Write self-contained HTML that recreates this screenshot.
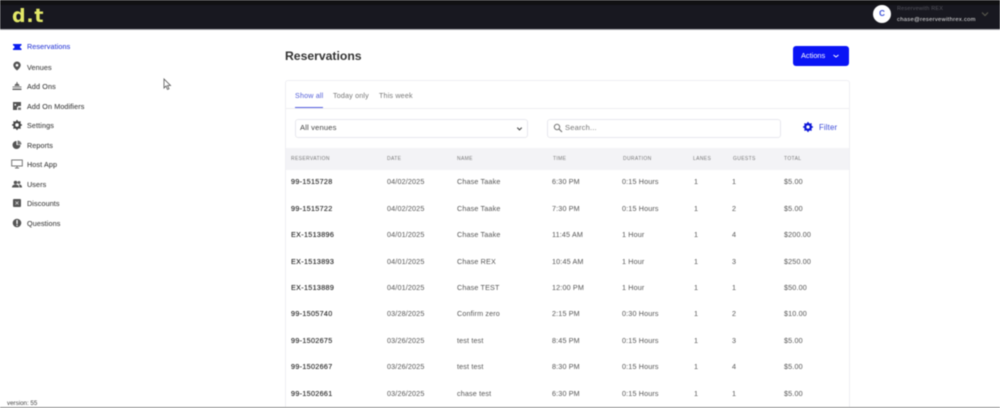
<!DOCTYPE html>
<html><head><meta charset="utf-8"><style>
html,body{margin:0;padding:0;height:408px;overflow:hidden}
body{width:1000px;position:relative;background:#fff;font-family:"Liberation Sans",sans-serif;color:#444}
.a{position:absolute;white-space:nowrap;line-height:12px}
.n{font-size:7.2px;left:27px;color:#444;letter-spacing:.12px;-webkit-text-stroke:.1px #444}
.i{position:absolute;left:12px;width:10px;height:10px}
.h{font-size:5px;top:153px;color:#777;letter-spacing:.35px;line-height:12px}
.c{font-size:7.2px;color:#555;letter-spacing:.15px}
.r{color:#222;font-size:7.2px;letter-spacing:.32px;-webkit-text-stroke:.12px #222}
#w{position:absolute;left:0;top:0;width:1000px;height:408px;overflow:hidden;filter:blur(.4px)}
</style></head><body><div id="w">
<div class="a" style="left:0;top:0;width:1000px;height:29px;background:#181820;border-bottom:1px solid #a9a9ad"></div>
<div class="a" style="left:0;top:0;width:1000px;height:5px;background:#111113"></div>
<div class="a" style="left:12px;top:5px;font-family:'DejaVu Sans',sans-serif;font-size:19px;line-height:22px;font-weight:bold;color:#e3e868;letter-spacing:.8px">d.t</div>
<div class="a" style="left:873px;top:5px;width:18px;height:18px;border-radius:50%;background:#fff;color:#3b50d8;font-size:8px;font-weight:bold;line-height:18px;text-align:center">C</div>
<div class="a" style="left:897px;top:3px;font-size:5.5px;color:#55555c;line-height:12px;letter-spacing:.2px">Reservewith REX</div>
<div class="a" style="left:897px;top:14px;font-size:5.8px;color:#e8e8e8;line-height:12px;letter-spacing:.3px">chase@reservewithrex.com</div>
<svg class="i" style="left:980px;top:9px" viewBox="0 0 10 10"><path d="M2 3.500l3 3 3-3" fill="none" stroke="#56564c" stroke-width="1.200"/></svg>

<svg class="i" style="top:42px" viewBox="0 0 10 10"><path d="M1 2h8.500v1.500a1.500 1.500 0 000 3V8H1V6.500a1.500 1.500 0 000-3z" fill="#0a1ef0"/></svg>
<div class="a n" style="top:41px;color:#3342d8;-webkit-text-stroke:.1px #3342d8">Reservations</div>
<svg class="i" style="top:61px" viewBox="0 0 10 10"><path d="M5 .5a3.700 3.700 0 013.700 3.700C8.700 6.500 5 9.500 5 9.500S1.300 6.500 1.300 4.200A3.700 3.700 0 015 .5z" fill="#555"/><circle cx="5" cy="4.200" r="1.300" fill="#fff"/></svg>
<div class="a n" style="top:62px">Venues</div>
<svg class="i" style="top:81px" viewBox="0 0 10 10"><path d="M2.500 5a2.500 2.500 0 015 0z" fill="#666"/><rect x="4.500" y="1" width="1" height="2" fill="#666"/><rect x=".5" y="5.500" width="9" height="1" fill="#777"/><rect x=".5" y="7.500" width="9" height="1.500" fill="#666"/></svg>
<div class="a n" style="top:81px">Add Ons</div>
<svg class="i" style="top:101px" viewBox="0 0 10 10"><path d="M1 1h8v4H6v1H5v3H1z" fill="#555"/><rect x="2.500" y="3" width="1.500" height="1.500" fill="#fff"/><rect x="6" y="6.500" width="3" height="2.500" fill="#777"/></svg>
<div class="a n" style="top:101px">Add On Modifiers</div>
<svg class="i" style="top:120px" viewBox="0 0 10 10"><circle cx="5" cy="5" r="3" fill="none" stroke="#444" stroke-width="2"/><path d="M5 0v10M0 5h10M1.500 1.500l7 7M8.500 1.500l-7 7" stroke="#444" stroke-width="1.300"/><circle cx="5" cy="5" r="1.700" fill="#fff"/></svg>
<div class="a n" style="top:120px">Settings</div>
<svg class="i" style="top:140px" viewBox="0 0 10 10"><path d="M4.500 1a4 4 0 104 4h-4z" fill="#555"/><path d="M5.500 .5a4 4 0 014 4h-4z" fill="#777"/></svg>
<div class="a n" style="top:140px">Reports</div>
<svg class="i" style="top:159px;left:11px;width:12px" viewBox="0 0 12 10"><rect x=".7" y="1" width="10.600" height="6" fill="none" stroke="#777" stroke-width="1"/><path d="M4 9h4M6 7v2" stroke="#777"/></svg>
<div class="a n" style="top:159px">Host App</div>
<svg class="i" style="top:179px" viewBox="0 0 10 10"><circle cx="3.500" cy="3.500" r="1.800" fill="#555"/><circle cx="7" cy="3.500" r="1.500" fill="#666"/><path d="M0 8.500c0-2 1.500-3 3.500-3s3.500 1 3.500 3zM7.500 8.500h2.500c0-2-1-3-3-3z" fill="#555"/></svg>
<div class="a n" style="top:179px">Users</div>
<svg class="i" style="top:198px" viewBox="0 0 10 10"><rect x="1" y="1" width="8" height="8" rx="1" fill="#555"/><path d="M3.500 3.500l3 3M6.500 3.500l-3 3" stroke="#ddd" stroke-width=".8"/></svg>
<div class="a n" style="top:198px">Discounts</div>
<svg class="i" style="top:218px" viewBox="0 0 10 10"><circle cx="5" cy="5" r="4.300" fill="#555"/><rect x="4.400" y="2" width="1.300" height="4" fill="#fff"/><rect x="4.400" y="6.800" width="1.300" height="1.200" fill="#fff"/></svg>
<div class="a n" style="top:218px">Questions</div>
<svg class="i" style="left:163px;top:78px;width:9px;height:13px" viewBox="0 0 9 13"><path d="M1 1v9l2-2 1.500 3.500 1.500-.7L4.500 7.500H7.500z" fill="#fff" stroke="#555" stroke-width=".8"/></svg>
<div class="a" style="left:7px;top:399px;font-size:6.2px;color:#444;line-height:10px">version: 55</div>

<div class="a" style="left:285px;top:48px;font-size:12.2px;font-weight:bold;line-height:16px;color:#333">Reservations</div>
<div class="a" style="left:793px;top:46px;width:56px;height:20px;background:#0a14f5;border-radius:3px"></div>
<div class="a" style="left:801px;top:50px;font-size:7.400px;color:#fff">Actions</div>
<svg class="i" style="left:831px;top:51px" viewBox="0 0 10 10"><path d="M2.500 4l2.500 2 2.500-2" fill="none" stroke="#fff" stroke-width="1"/></svg>

<div class="a" style="left:285px;top:80px;width:563px;height:340px;border:1px solid #efeff3;border-radius:3px"></div>
<div class="a c" style="left:295px;top:90px;color:#5560d8">Show all</div>
<div class="a c" style="left:333px;top:90px;color:#777">Today only</div>
<div class="a c" style="left:379px;top:90px;color:#777">This week</div>
<div class="a" style="left:295px;top:107px;width:28px;height:1px;background:#5560e0"></div>
<div class="a" style="left:286px;top:108px;width:563px;height:1px;background:#eeeef2"></div>

<div class="a" style="left:295px;top:119px;width:231px;height:17px;border:1px solid #e8e8ee;border-radius:3px"></div>
<div class="a c" style="left:300px;top:122px;font-size:7.600px;color:#444">All venues</div>
<svg class="i" style="left:515px;top:124px;width:9px;height:9px" viewBox="0 0 10 10"><path d="M2.500 4l2.500 2.500 2.500-2.500" fill="none" stroke="#444" stroke-width="1.200"/></svg>
<div class="a" style="left:547px;top:119px;width:232px;height:17px;border:1px solid #e8e8ee;border-radius:3px"></div>
<svg class="i" style="left:553px;top:123px" viewBox="0 0 10 10"><circle cx="4" cy="4" r="2.700" fill="none" stroke="#777" stroke-width="1"/><path d="M6 6l3 3" stroke="#777" stroke-width="1.200"/></svg>
<div class="a c" style="left:565px;top:122px;color:#777;font-size:7.600px">Search...</div>
<svg class="i" style="left:803px;top:122px" viewBox="0 0 10 10"><circle cx="5" cy="5" r="3" fill="none" stroke="#0a14d8" stroke-width="2"/><path d="M5 0v10M0 5h10M1.500 1.500l7 7M8.500 1.500l-7 7" stroke="#0a14d8" stroke-width="1.300"/><circle cx="5" cy="5" r="1.600" fill="#fff"/></svg>
<div class="a c" style="left:819px;top:122px;color:#3b4ad8;font-size:7.800px">Filter</div>

<div class="a" style="left:286px;top:148px;width:563px;height:22px;background:#f3f3f6"></div>
<div class="a h" style="left:291px">RESERVATION</div><div class="a h" style="left:387px">DATE</div><div class="a h" style="left:457px">NAME</div><div class="a h" style="left:553px">TIME</div><div class="a h" style="left:623px">DURATION</div><div class="a h" style="left:693px">LANES</div><div class="a h" style="left:733px">GUESTS</div><div class="a h" style="left:784px">TOTAL</div>

<div class="a c r" style="left:291px;top:176px">99-1515728</div><div class="a c" style="left:387px;top:176px">04/02/2025</div><div class="a c" style="left:457px;top:176px">Chase Taake</div><div class="a c" style="left:552px;top:176px">6:30 PM</div><div class="a c" style="left:622px;top:176px">0:15 Hours</div><div class="a c" style="left:694px;top:176px">1</div><div class="a c" style="left:732px;top:176px">1</div><div class="a c" style="left:784px;top:176px">$5.00</div>
<div class="a c r" style="left:291px;top:203px">99-1515722</div><div class="a c" style="left:387px;top:203px">04/02/2025</div><div class="a c" style="left:457px;top:203px">Chase Taake</div><div class="a c" style="left:552px;top:203px">7:30 PM</div><div class="a c" style="left:622px;top:203px">0:15 Hours</div><div class="a c" style="left:694px;top:203px">1</div><div class="a c" style="left:732px;top:203px">2</div><div class="a c" style="left:784px;top:203px">$5.00</div>
<div class="a c r" style="left:291px;top:229px">EX-1513896</div><div class="a c" style="left:387px;top:229px">04/01/2025</div><div class="a c" style="left:457px;top:229px">Chase Taake</div><div class="a c" style="left:552px;top:229px">11:45 AM</div><div class="a c" style="left:622px;top:229px">1 Hour</div><div class="a c" style="left:694px;top:229px">1</div><div class="a c" style="left:732px;top:229px">4</div><div class="a c" style="left:784px;top:229px">$200.00</div>
<div class="a c r" style="left:291px;top:256px">EX-1513893</div><div class="a c" style="left:387px;top:256px">04/01/2025</div><div class="a c" style="left:457px;top:256px">Chase REX</div><div class="a c" style="left:552px;top:256px">10:45 AM</div><div class="a c" style="left:622px;top:256px">1 Hour</div><div class="a c" style="left:694px;top:256px">1</div><div class="a c" style="left:732px;top:256px">3</div><div class="a c" style="left:784px;top:256px">$250.00</div>
<div class="a c r" style="left:291px;top:282px">EX-1513889</div><div class="a c" style="left:387px;top:282px">04/01/2025</div><div class="a c" style="left:457px;top:282px">Chase TEST</div><div class="a c" style="left:552px;top:282px">12:00 PM</div><div class="a c" style="left:622px;top:282px">1 Hour</div><div class="a c" style="left:694px;top:282px">1</div><div class="a c" style="left:732px;top:282px">1</div><div class="a c" style="left:784px;top:282px">$50.00</div>
<div class="a c r" style="left:291px;top:308px">99-1505740</div><div class="a c" style="left:387px;top:308px">03/28/2025</div><div class="a c" style="left:457px;top:308px">Confirm zero</div><div class="a c" style="left:552px;top:308px">2:15 PM</div><div class="a c" style="left:622px;top:308px">0:30 Hours</div><div class="a c" style="left:694px;top:308px">1</div><div class="a c" style="left:732px;top:308px">2</div><div class="a c" style="left:784px;top:308px">$10.00</div>
<div class="a c r" style="left:291px;top:335px">99-1502675</div><div class="a c" style="left:387px;top:335px">03/26/2025</div><div class="a c" style="left:457px;top:335px">test test</div><div class="a c" style="left:552px;top:335px">8:45 PM</div><div class="a c" style="left:622px;top:335px">0:15 Hours</div><div class="a c" style="left:694px;top:335px">1</div><div class="a c" style="left:732px;top:335px">3</div><div class="a c" style="left:784px;top:335px">$5.00</div>
<div class="a c r" style="left:291px;top:361px">99-1502667</div><div class="a c" style="left:387px;top:361px">03/26/2025</div><div class="a c" style="left:457px;top:361px">test test</div><div class="a c" style="left:552px;top:361px">8:30 PM</div><div class="a c" style="left:622px;top:361px">0:15 Hours</div><div class="a c" style="left:694px;top:361px">1</div><div class="a c" style="left:732px;top:361px">4</div><div class="a c" style="left:784px;top:361px">$5.00</div>
<div class="a c r" style="left:291px;top:388px">99-1502661</div><div class="a c" style="left:387px;top:388px">03/26/2025</div><div class="a c" style="left:457px;top:388px">chase test</div><div class="a c" style="left:552px;top:388px">6:30 PM</div><div class="a c" style="left:622px;top:388px">0:15 Hours</div><div class="a c" style="left:694px;top:388px">1</div><div class="a c" style="left:732px;top:388px">1</div><div class="a c" style="left:784px;top:388px">$5.00</div>
<div class="a" style="left:0;top:407px;width:1000px;height:1px;background:#888"></div>
</div></body></html>
